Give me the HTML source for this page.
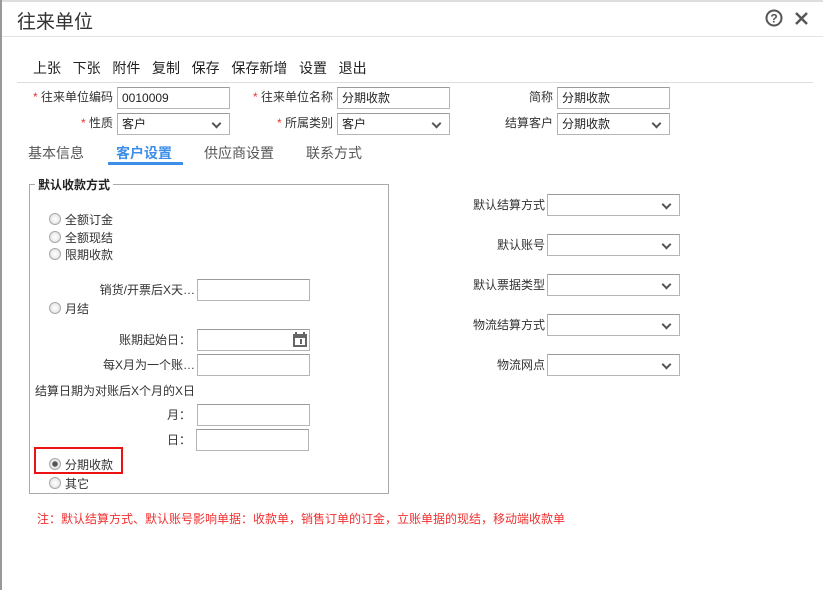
<!DOCTYPE html>
<html><head><meta charset="utf-8"><style>
*{margin:0;padding:0;box-sizing:border-box}
body{width:823px;height:590px;background:#fff;position:relative;overflow:hidden;font-family:"Liberation Sans","Noto Sans CJK SC",sans-serif;color:#333;font-size:12px}
.a{position:absolute;white-space:nowrap}
.in{position:absolute;border:1px solid #b5b5b5;border-top-color:#9a9a9a;background:#fff;height:22px;font-size:12px;padding:2px 4px;line-height:17px;color:#222}
.sel::after{content:"";position:absolute;right:9px;top:6px;width:5px;height:5px;border-right:2px solid #555;border-bottom:2px solid #555;transform:rotate(45deg)}
.lbl{position:absolute;text-align:right;white-space:nowrap;font-size:12px;line-height:22px;color:#333}
.r{position:absolute;width:12px;height:12px;border-radius:50%;border:1px solid #a8a8a8;background:radial-gradient(#fff,#ddd)}
.rt{position:absolute;font-size:12px;line-height:16px}
.st{color:#e33}
</style></head><body>
<div class="a" style="left:0;top:0;width:823px;height:2px;background:#ddd"></div>
<div class="a" style="left:0;top:0;width:2px;height:590px;background:#999"></div>
<div class="a" style="left:17px;top:7px;font-size:19px;color:#333">往来单位</div>
<svg class="a" style="left:765px;top:9px" width="18" height="18" viewBox="0 0 18 18"><circle cx="9" cy="9" r="7.5" fill="none" stroke="#555" stroke-width="2"/><text x="9" y="13.5" text-anchor="middle" font-size="12" font-weight="bold" fill="#555" font-family="Liberation Sans">?</text></svg>
<svg class="a" style="left:794px;top:11px" width="15" height="15" viewBox="0 0 15 15"><path d="M2 2L13 13M13 2L2 13" stroke="#555" stroke-width="2.4"/></svg>
<div class="a" style="left:2px;top:36px;width:821px;height:1px;background:#e3e3e3"></div>
<div class="a" style="left:33px;top:58px;font-size:14px;color:#222">上张&nbsp;&nbsp;&nbsp;下张&nbsp;&nbsp;&nbsp;附件&nbsp;&nbsp;&nbsp;复制&nbsp;&nbsp;&nbsp;保存&nbsp;&nbsp;&nbsp;保存新增&nbsp;&nbsp;&nbsp;设置&nbsp;&nbsp;&nbsp;退出</div>
<div class="a" style="left:17px;top:82px;width:796px;height:1px;background:#ddd"></div>

<div class="lbl" style="right:710px;top:86px"><span class="st">*</span> 往来单位编码</div>
<div class="in" style="left:117px;top:87px;width:113px">0010009</div>
<div class="lbl" style="right:490px;top:86px"><span class="st">*</span> 往来单位名称</div>
<div class="in" style="left:337px;top:87px;width:113px">分期收款</div>
<div class="lbl" style="right:270px;top:86px">简称</div>
<div class="in" style="left:557px;top:87px;width:113px">分期收款</div>

<div class="lbl" style="right:710px;top:112px"><span class="st">*</span> 性质</div>
<div class="in sel" style="left:117px;top:113px;width:113px">客户</div>
<div class="lbl" style="right:490px;top:112px"><span class="st">*</span> 所属类别</div>
<div class="in sel" style="left:337px;top:113px;width:113px">客户</div>
<div class="lbl" style="right:270px;top:112px">结算客户</div>
<div class="in sel" style="left:557px;top:113px;width:113px">分期收款</div>

<div class="a" style="left:28px;top:143px;font-size:14px;color:#555">基本信息</div>
<div class="a" style="left:116px;top:143px;font-size:14px;color:#3d8ee8;font-weight:bold">客户设置</div>
<div class="a" style="left:108px;top:162px;width:75px;height:3px;background:#3d8ee8"></div>
<div class="a" style="left:204px;top:143px;font-size:14px;color:#555">供应商设置</div>
<div class="a" style="left:306px;top:143px;font-size:14px;color:#555">联系方式</div>

<div class="a" style="left:29px;top:184px;width:360px;height:310px;border:1px solid #aaa"></div>
<div class="a" style="left:35px;top:176px;background:#fff;padding:0 3px;font-weight:bold;font-size:12px;color:#222">默认收款方式</div>

<div class="r" style="left:49px;top:213px"></div><div class="rt" style="left:65px;top:212px">全额订金</div>
<div class="r" style="left:49px;top:231px"></div><div class="rt" style="left:65px;top:230px">全额现结</div>
<div class="r" style="left:49px;top:248px"></div><div class="rt" style="left:65px;top:247px">限期收款</div>
<div class="lbl" style="right:628px;top:279px">销货/开票后X天…</div>
<div class="in" style="left:197px;top:279px;width:113px"></div>
<div class="r" style="left:49px;top:302px"></div><div class="rt" style="left:65px;top:301px">月结</div>
<div class="lbl" style="right:632px;top:329px">账期起始日：</div>
<div class="in" style="left:197px;top:329px;width:113px"></div>
<svg class="a" style="left:292px;top:332px" width="16" height="16" viewBox="0 0 16 16"><rect x="1" y="2" width="14" height="13" fill="#666"/><rect x="3" y="6" width="10" height="7" fill="#fff"/><rect x="3" y="0" width="2" height="4" fill="#666"/><rect x="11" y="0" width="2" height="4" fill="#666"/><rect x="8" y="7" width="2" height="5" fill="#666"/></svg>
<div class="lbl" style="right:628px;top:354px">每X月为一个账…</div>
<div class="in" style="left:197px;top:354px;width:113px"></div>
<div class="a" style="left:35px;top:382px;font-size:12px">结算日期为对账后X个月的X日</div>
<div class="lbl" style="right:632px;top:404px">月：</div>
<div class="in" style="left:197px;top:404px;width:113px"></div>
<div class="lbl" style="right:632px;top:429px">日：</div>
<div class="in" style="left:196px;top:429px;width:113px"></div>
<div class="a" style="left:34px;top:447px;width:89px;height:27px;border:2px solid #e11"></div>
<div class="r" style="left:49px;top:458px;background:radial-gradient(#555 0,#555 2.5px,#eee 3px,#ddd)"></div><div class="rt" style="left:65px;top:457px">分期收款</div>
<div class="r" style="left:49px;top:477px"></div><div class="rt" style="left:65px;top:476px">其它</div>

<div class="lbl" style="right:278px;top:194px">默认结算方式</div><div class="in sel" style="left:547px;top:194px;width:133px"></div>
<div class="lbl" style="right:278px;top:234px">默认账号</div><div class="in sel" style="left:547px;top:234px;width:133px"></div>
<div class="lbl" style="right:278px;top:274px">默认票据类型</div><div class="in sel" style="left:547px;top:274px;width:133px"></div>
<div class="lbl" style="right:278px;top:314px">物流结算方式</div><div class="in sel" style="left:547px;top:314px;width:133px"></div>
<div class="lbl" style="right:278px;top:354px">物流网点</div><div class="in sel" style="left:547px;top:354px;width:133px"></div>

<div class="a" style="left:37px;top:510px;font-size:12px;color:#f03030">注：默认结算方式、默认账号影响单据：收款单，销售订单的订金，立账单据的现结，移动端收款单</div>
</body></html>
